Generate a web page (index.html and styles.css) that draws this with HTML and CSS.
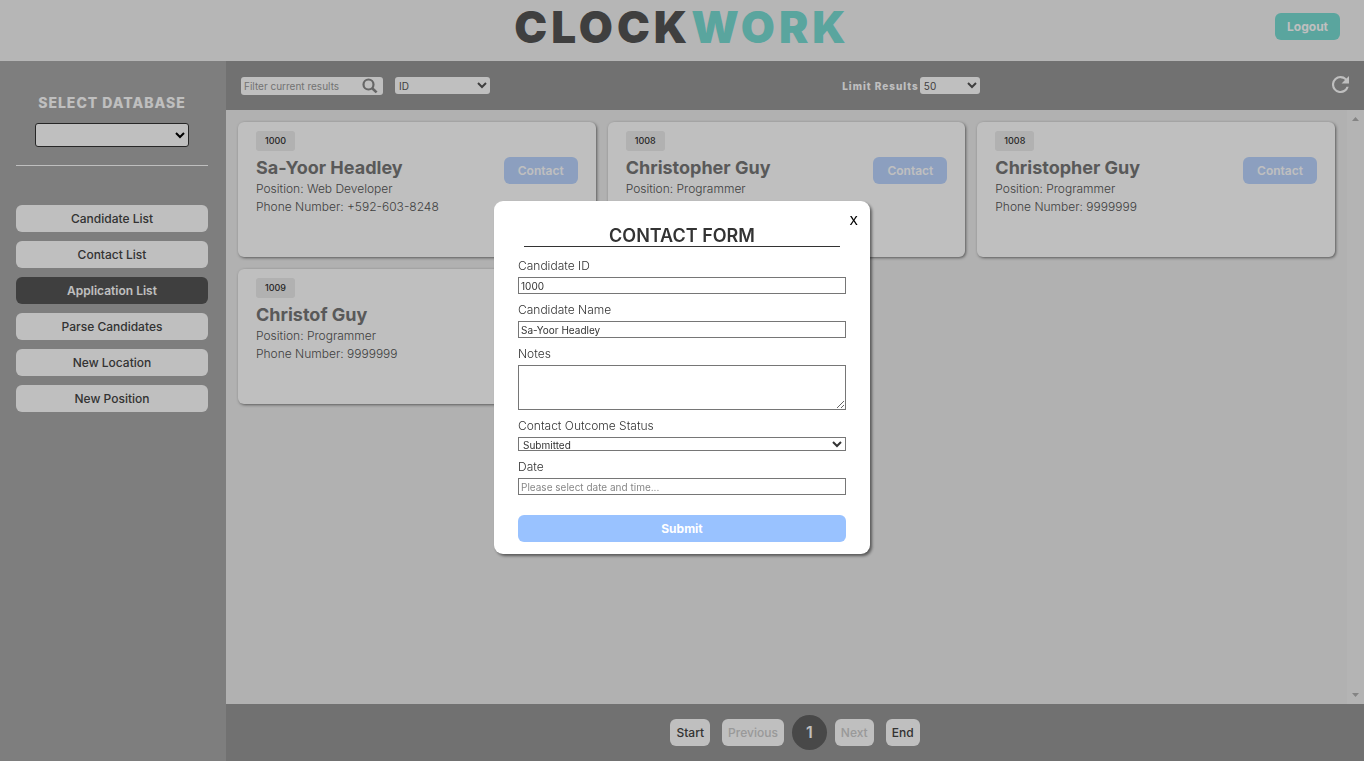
FILE: index.html
```
<!DOCTYPE html>
<html lang="en">
<head>
<meta charset="utf-8">
<title>Clockwork</title>
<link rel="stylesheet" href="styles.css">
</head>
<body>
<div class="app">
  <header class="header">
    <h1 class="logo">CLOCK<span class="logo-accent">WORK</span></h1>
    <button class="btn logout" type="button">Logout</button>
  </header>
  <div class="body">
    <nav class="sidebar">
      <div class="database">
        <label class="database-label" for="database">SELECT DATABASE</label>
        <select class="database-select" id="database"><option></option></select>
      </div>
      <button class="btn nav-btn" type="button">Candidate List</button>
      <button class="btn nav-btn" type="button">Contact List</button>
      <button class="btn nav-btn active" type="button">Application List</button>
      <button class="btn nav-btn" type="button">Parse Candidates</button>
      <button class="btn nav-btn" type="button">New Location</button>
      <button class="btn nav-btn" type="button">New Position</button>
    </nav>
    <main class="main">
      <div class="toolbar">
        <div class="filters">
          <div class="search">
            <input class="search-input" type="text" placeholder="Filter current results" aria-label="Filter current results">
            <svg class="search-icon" viewBox="0 0 16 16"><circle cx="6.5" cy="6.5" r="5" fill="none" stroke="currentColor" stroke-width="2.2"/><path d="M10.2 10.2 14.6 14.4" stroke="currentColor" stroke-width="2.6"/></svg>
          </div>
          <select class="tool-select by-field" aria-label="Filter field"><option>ID</option></select>
        </div>
        <div class="limit">
          <label class="limit-label" for="limit">Limit Results</label>
          <select class="tool-select limit-select" id="limit"><option>50</option></select>
        </div>
        <button class="refresh" type="button" aria-label="Refresh">
          <svg class="refresh-icon" viewBox="4 4 16 16"><path fill="currentColor" d="M17.65 6.35A7.96 7.96 0 0 0 12 4a8 8 0 1 0 7.73 10h-2.08A6 6 0 1 1 12 6c1.66 0 3.14.69 4.22 1.78L13 11h7V4z"/></svg>
        </button>
      </div>
      <div class="results">
        <div class="cards">
          <article class="card">
            <div class="card-info"><span class="tag">1000</span><h2 class="name">Sa-Yoor Headley</h2><p class="line">Position: Web Developer</p><p class="line">Phone Number: +592-603-8248</p></div>
            <button class="btn contact" type="button">Contact</button>
          </article>
          <article class="card">
            <div class="card-info"><span class="tag">1008</span><h2 class="name">Christopher Guy</h2><p class="line">Position: Programmer</p><p class="line">Phone Number: 9999999</p></div>
            <button class="btn contact" type="button">Contact</button>
          </article>
          <article class="card">
            <div class="card-info"><span class="tag">1008</span><h2 class="name">Christopher Guy</h2><p class="line">Position: Programmer</p><p class="line">Phone Number: 9999999</p></div>
            <button class="btn contact" type="button">Contact</button>
          </article>
          <article class="card">
            <div class="card-info"><span class="tag">1009</span><h2 class="name">Christof Guy</h2><p class="line">Position: Programmer</p><p class="line">Phone Number: 9999999</p></div>
            <button class="btn contact" type="button">Contact</button>
          </article>
        </div>
        <div class="scrollbar">
          <svg class="arrow" viewBox="0 0 7 4"><path d="M0 4 3.5 0 7 4z"/></svg>
          <svg class="arrow" viewBox="0 0 7 4"><path d="M0 0 3.5 4 7 0z"/></svg>
        </div>
      </div>
      <footer class="pager">
        <button class="btn page-btn" type="button">Start</button>
        <div class="pages">
          <button class="btn page-btn" type="button" disabled>Previous</button>
          <span class="page-current">1</span>
          <button class="btn page-btn" type="button" disabled>Next</button>
        </div>
        <button class="btn page-btn" type="button">End</button>
      </footer>
    </main>
  </div>
</div>
<div class="overlay">
  <form class="modal">
    <button class="close" type="button">X</button>
    <h2 class="modal-title">CONTACT FORM</h2>
    <div class="field"><label class="label" for="cid">Candidate ID</label><input class="control" id="cid" type="text" value="1000"></div>
    <div class="field"><label class="label" for="cname">Candidate Name</label><input class="control" id="cname" type="text" value="Sa-Yoor Headley"></div>
    <div class="field"><label class="label" for="notes">Notes</label><textarea class="control notes" id="notes"></textarea></div>
    <div class="field"><label class="label" for="status">Contact Outcome Status</label><select class="control status" id="status"><option>Submitted</option></select></div>
    <div class="field"><label class="label" for="date">Date</label><input class="control" id="date" type="text" placeholder="Please select date and time..."></div>
    <button class="btn submit" type="submit">Submit</button>
  </form>
</div>
</body>
</html>
```
FILE: styles.css
```
* { box-sizing: border-box; }
body { margin: 0; color: #555; font: 300 12px/18px Inter, "Liberation Sans", sans-serif; }
h1, h2, p { margin: 0; }
button, input, select, textarea { font-family: inherit; margin: 0; }

.app { display: flex; flex-direction: column; min-height: 100vh; }
.btn { height: 27px; border: 0; border-radius: 6px; background: #fff; color: #444; font-size: 12px; font-weight: 500; }

.header { display: grid; grid-template-columns: 1fr auto 1fr; align-items: center; height: 61px; padding: 0 24px 8px; background: #f3f3f3; }
.logo { grid-column: 2; color: #555; font-size: 44px; line-height: 52px; font-weight: 900; letter-spacing: 4px; }
.logo-accent { color: #78dcd3; }
.logout { justify-self: end; padding: 0 12px; background: #78dcd3; color: #fff; font-weight: 700; }

.body { display: flex; flex: 1; }
.sidebar { display: flex; flex-direction: column; gap: 9px; width: 226px; padding: 32px 18px 16px 16px; background: #a9a9a9; }
.database { display: flex; flex-direction: column; align-items: center; gap: 10px; margin-bottom: 30px; padding-bottom: 18px; border-bottom: 1px solid #fff; }
.database-label { color: #fff; font-size: 14px; line-height: 20px; font-weight: 800; letter-spacing: 1px; }
.database-select { width: 80%; height: 24px; border: 1px solid #333; border-radius: 3px; background: #fff; }
.nav-btn.active { background: #555; color: #fff; font-weight: 600; }

.main { display: flex; flex: 1; flex-direction: column; min-width: 0; }
.toolbar { display: flex; align-items: center; justify-content: space-between; height: 49px; padding: 0 15px; background: #979797; }
.filters { display: flex; align-items: center; gap: 12px; }
.search { display: flex; align-items: center; width: 142px; height: 18px; padding-right: 5px; border-radius: 3px; background: #fff; color: #888; }
.search-input { flex: 1; min-width: 0; padding: 0 3px; border: 0; background: none; font-size: 10px; font-weight: 400; }
.search-input::placeholder { color: #999; }
.search-icon { width: 16px; height: 16px; }
.tool-select { height: 17px; border: 0; border-radius: 3px; background: #fff; color: #555; font-size: 10px; font-weight: 400; }
.by-field { width: 95px; }
.limit { display: flex; align-items: center; gap: 1px; }
.limit-label { color: #fff; font-size: 10px; font-weight: 800; letter-spacing: 1px; }
.limit-select { width: 60px; }
.refresh { display: flex; padding: 0 0 3px; border: 0; background: none; color: #fff; }
.refresh-icon { width: 17px; height: 17px; }

.results { display: flex; flex: 1; background: #ececec; }
.cards { display: grid; flex: 1; grid-template-columns: repeat(3, 1fr); grid-auto-rows: 135px; gap: 12px; padding: 12px; }
.card { display: flex; align-items: flex-start; justify-content: space-between; padding: 9px 18px; border-radius: 6px; background: #fff; box-shadow: 1px 1px 3px #777; }
.card-info { display: flex; flex-direction: column; align-items: flex-start; }
.tag { margin-bottom: 5px; padding: 0 9px; border-radius: 3px; background: #ececec; color: #333; font-size: 9px; line-height: 20px; font-weight: 500; }
.name { color: #777; font-size: 18px; line-height: 24px; font-weight: 700; }
.contact { margin-top: 26px; padding: 0 14px; background: #bbd5ff; color: #fff; font-weight: 600; }
.scrollbar { display: flex; flex-direction: column; align-items: center; justify-content: space-between; width: 17px; padding: 7px 0; background: #f1f1f1; }
.arrow { width: 7px; height: 4px; fill: #b0b0b0; }

.pager { display: flex; align-items: center; justify-content: center; gap: 12px; height: 57px; background: #979797; }
.pages { display: flex; align-items: center; gap: 8px; }
.page-btn { padding: 0 6px; }
.page-btn:disabled { color: #ccc; }
.page-current { width: 35px; border-radius: 50%; background: #606060; color: #fff; font-size: 16px; line-height: 35px; font-weight: 600; text-align: center; }

.overlay { position: fixed; inset: 0; display: flex; align-items: center; justify-content: center; padding-bottom: 6px; background: rgba(0, 0, 0, 0.25); }
.modal { display: flex; flex-direction: column; gap: 8px; width: 376px; padding: 10px 24px 12px; border-radius: 9px; background: #fff; box-shadow: 2px 2px 3px rgba(0, 0, 0, 0.5); }
.close { align-self: flex-end; height: 18px; margin-right: -15px; padding: 0 3px; border: 0; background: none; color: #000; font-size: 12px; font-weight: 500; }
.modal-title { margin: -12px 6px 3px; border-bottom: 1px solid #333; color: #333; font-size: 18px; line-height: 21px; font-weight: 600; text-align: center; }
.field { display: flex; flex-direction: column; gap: 3px; }
.label { color: #333; line-height: 16px; }
.control { height: 17px; padding: 0 2px; border: 1px solid #767676; border-radius: 0; background: #fff; color: #333; font-size: 10px; font-weight: 400; }
.control::placeholder { color: #888; }
.notes { height: 45px; resize: both; }
.status { height: 14px; padding: 0; line-height: 12px; }
.submit { margin-top: 12px; background: #99c2ff; color: #fff; font-weight: 700; }
```
